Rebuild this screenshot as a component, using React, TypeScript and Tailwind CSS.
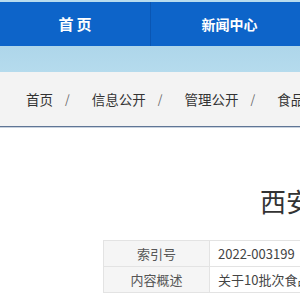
export default function App() {
  const crumbs = ["首页", "信息公开", "管理公开", "食品安全"];
  return (
    <div
      className="w-[300px] h-[300px] overflow-hidden bg-white"
      style={{ fontFamily: '"Microsoft YaHei", "Noto Sans CJK SC", sans-serif' }}
    >
      <div className="h-[2px] bg-[#b7dcef]" />
      <nav className="flex h-[44px] w-[600px] bg-[#0d64c9]">
        <div className="flex w-[151px] shrink-0 items-center justify-center border-r border-[#0a56b3] pl-[3px] text-[15px] font-bold tracking-[3px] text-white">
          首页
        </div>
        <div className="flex w-[158px] shrink-0 items-center justify-center border-r border-[#0a56b3] text-[14px] font-bold text-white">
          新闻中心
        </div>
      </nav>
      <div className="h-[26px] bg-gradient-to-b from-[#aed6ea] to-[#b5dbed]" />
      <div className="flex h-[54px] items-center whitespace-nowrap bg-[#f3f3f3] pl-[26px] text-[13.5px] text-[#333]">
        {crumbs.map((c, i) => (
          <span key={c} className="flex items-center">
            {i > 0 && (
              <span className="ml-[12px] mr-[22px] text-[12px] text-[#666]">/</span>
            )}
            <span>{c}</span>
          </span>
        ))}
      </div>
      <div className="h-[1px] bg-[#5f7595]" />
      <div className="h-[1px] bg-[#c9d2de]" />
      <div className="h-[58px]" />
      <h1 className="whitespace-nowrap pl-[260px] text-[26px] leading-[30px] text-[#333]">
        西安市市场监督管理局
      </h1>
      <div className="h-[24px]" />
      <table className="ml-[103px] w-[400px] border-collapse whitespace-nowrap text-[13px] text-[#444]">
        <tbody>
          <tr className="h-[26px]">
            <td className="w-[106px] border border-[#e3e3e3] bg-[#f5f5f5] text-center text-[#555]">索引号</td>
            <td className="border border-[#e3e3e3] pl-[8px]">2022-003199</td>
          </tr>
          <tr className="h-[26px]">
            <td className="w-[106px] border border-[#e3e3e3] bg-[#f5f5f5] text-center text-[#555]">内容概述</td>
            <td className="border border-[#e3e3e3] pl-[8px]">关于10批次食品不合格情况的通告</td>
          </tr>
        </tbody>
      </table>
    </div>
  );
}
